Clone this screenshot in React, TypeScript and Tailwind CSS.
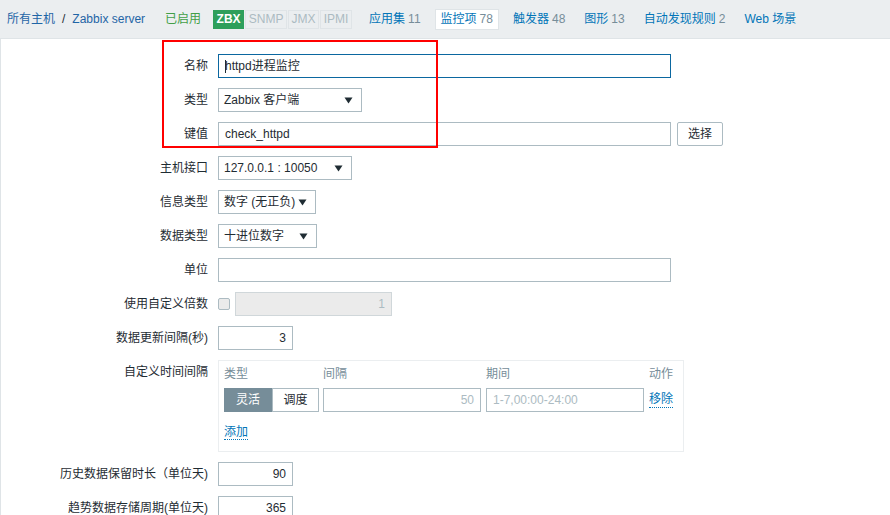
import React from "react";

const font = { fontFamily: '"Liberation Sans", Arial, "Noto Sans CJK SC", sans-serif' };

function Arrow() {
  return (
    <svg width="9" height="7" viewBox="0 0 9 7" className="shrink-0">
      <path d="M0.5 0.5 L8.5 0.5 L4.5 6.5 Z" fill="#1f2c33" />
    </svg>
  );
}

function Select({ value, width }: { value: string; width: string }) {
  return (
    <div className={`flex h-6 items-center justify-between border border-[#acbbc2] bg-white pl-[5px] pr-[8px] text-[#1f2c33] ${width}`}>
      <span className="whitespace-nowrap">{value}</span>
      <Arrow />
    </div>
  );
}

function Input({ value, width, align = "left", className = "" }: { value?: string; width: string; align?: "left" | "right"; className?: string }) {
  return (
    <div
      className={`flex h-6 items-center border border-[#acbbc2] bg-white px-[6px] text-[#1f2c33] ${
        align === "right" ? "justify-end" : ""
      } ${width} ${className}`}
    >
      {value}
    </div>
  );
}

function Label({ children, top = false }: { children: React.ReactNode; top?: boolean }) {
  return (
    <div className={`flex justify-end whitespace-nowrap text-[#1f2c33] ${top ? "items-start pt-[5px]" : "h-6 items-center"}`}>
      {children}
    </div>
  );
}

function Tab({ name, count, active = false }: { name: string; count: string; active?: boolean }) {
  return (
    <div
      className={`flex h-[21px] items-center whitespace-nowrap ${
        active ? "border border-[#dfe4e7] bg-white px-[5px] text-[#0275b8]" : "px-0 text-[#0275b8]"
      }`}
    >
      {name}
      {count && <span className="ml-[3px] text-[#768d99]">{count}</span>}
    </div>
  );
}

export default function App() {
  return (
    <div className="relative h-[515px] w-[890px] overflow-hidden bg-white text-[12px] leading-[14px]" style={font}>
      {/* top navigation */}
      <div className="flex h-[39px] items-center border-b border-[#dfe4e7] bg-[#ebeef0] pl-[7px]">
        <span className="text-[#1f65a6]">所有主机</span>
        <span className="mx-[7px] text-[#1f2c33]">/</span>
        <span className="text-[#1f65a6]">Zabbix server</span>
        <span className="ml-[20px] text-[#429e47]">已启用</span>
        <div className="ml-[12px] flex items-center gap-[1px] font-bold">
          <span className="flex h-[19px] w-[31px] items-center justify-center bg-[#2d9f5b] text-white">ZBX</span>
          <span className="flex h-[19px] w-[42px] items-center justify-center border border-[#dfe4e7] bg-[#ebeef0] font-normal text-[#acbbc2]">SNMP</span>
          <span className="flex h-[19px] w-[31px] items-center justify-center border border-[#dfe4e7] bg-[#ebeef0] font-normal text-[#acbbc2]">JMX</span>
          <span className="flex h-[19px] w-[32px] items-center justify-center border border-[#dfe4e7] bg-[#ebeef0] font-normal text-[#acbbc2]">IPMI</span>
        </div>
        <div className="ml-[17px] flex items-center gap-[14px]">
          <Tab name="应用集" count="11" />
          <Tab name="监控项" count="78" active />
          <div className="flex items-center gap-[19px]">
            <Tab name="触发器" count="48" />
            <Tab name="图形" count="13" />
            <Tab name="自动发现规则" count="2" />
            <Tab name="Web 场景" count="" />
          </div>
        </div>
      </div>

      {/* form */}
      <div className="h-full border-l border-[#dfe4e7] pt-[15px]">
        <div className="grid grid-cols-[207px_1fr] gap-x-[10px] gap-y-[10px]">
          <Label>名称</Label>
          <div className="flex h-6 w-[453px] items-center border border-[#0b67a0] bg-white px-[6px] text-[#1f2c33]">
            <span className="mr-[-1px] inline-block h-[13px] w-[1px] bg-[#1f2c33]" />
            httpd进程监控
          </div>

          <Label>类型</Label>
          <Select value="Zabbix 客户端" width="w-[144px]" />

          <Label>键值</Label>
          <div className="flex items-center gap-[6px]">
            <Input value="check_httpd" width="w-[453px]" />
            <div className="flex h-6 w-[46px] items-center justify-center rounded-[2px] border border-[#acbbc2] bg-white text-[#1f2c33]">选择</div>
          </div>

          <Label>主机接口</Label>
          <Select value="127.0.0.1 : 10050" width="w-[134px]" />

          <Label>信息类型</Label>
          <Select value="数字 (无正负)" width="w-[98px]" />

          <Label>数据类型</Label>
          <Select value="十进位数字" width="w-[99px]" />

          <Label>单位</Label>
          <Input width="w-[453px]" />

          <Label>使用自定义倍数</Label>
          <div className="flex items-center gap-[5px]">
            <span className="inline-block h-[12px] w-[12px] rounded-[2px] border border-[#acbbc2] bg-[#ebebeb]" />
            <Input value="1" width="w-[157px]" align="right" className="!bg-[#ebebeb] !text-[#acbbc2] border-[#d0d7da]" />
          </div>

          <Label>数据更新间隔(秒)</Label>
          <Input value="3" width="w-[75px]" align="right" />

          <Label top>自定义时间间隔</Label>
          <div className="w-[466px] border border-[#ebeef0] bg-white px-[5px] pt-[6px] pb-[12px]">
            <div className="flex text-[#768d99]">
              <span className="w-[99px]">类型</span>
              <span className="w-[163px]">间隔</span>
              <span className="w-[163px]">期间</span>
              <span>动作</span>
            </div>
            <div className="mt-[7px] flex items-center">
              <div className="flex">
                <span className="flex h-6 w-[48px] items-center justify-center border border-[#768d99] bg-[#768d99] text-white">灵活</span>
                <span className="flex h-6 w-[47px] items-center justify-center border border-[#acbbc2] bg-white text-[#1f2c33]">调度</span>
              </div>
              <Input value="50" width="w-[158px]" align="right" className="ml-[4px] !text-[#acbbc2]" />
              <Input value="1-7,00:00-24:00" width="w-[158px]" className="ml-[5px] !text-[#acbbc2] pl-[6px]" />
              <span className="ml-[5px] border-b border-dotted border-[#0275b8] leading-[15px] text-[#0275b8]">移除</span>
            </div>
            <div className="mt-[13px]">
              <span className="border-b border-dotted border-[#0275b8] text-[#0275b8]">添加</span>
            </div>
          </div>

          <Label>历史数据保留时长（单位天)</Label>
          <Input value="90" width="w-[75px]" align="right" />

          <Label>趋势数据存储周期(单位天)</Label>
          <Input value="365" width="w-[75px]" align="right" />
        </div>
      </div>

      {/* red annotation box */}
      <div className="pointer-events-none absolute left-[162px] top-[40px] h-[108px] w-[276px] border-2 border-[#ff0000]" />
    </div>
  );
}
